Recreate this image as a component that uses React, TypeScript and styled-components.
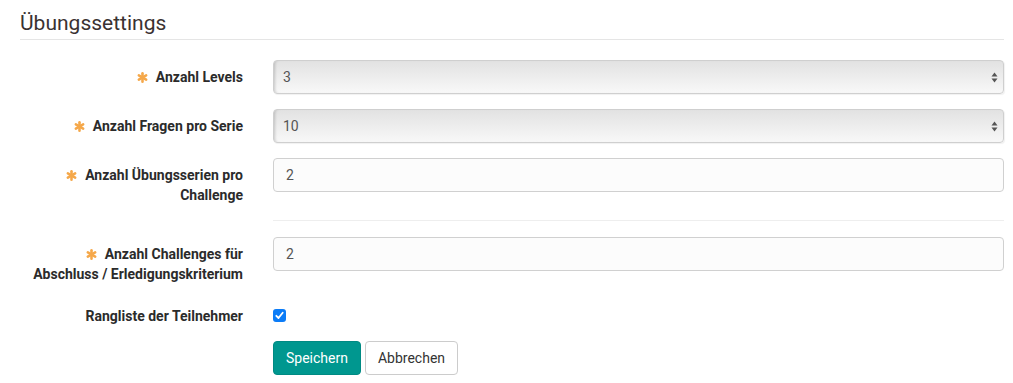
import React from "react";
import styled, { createGlobalStyle } from "styled-components";

const GlobalStyle = createGlobalStyle`
  html, body {
    margin: 0;
    padding: 0;
    background: #fff;
  }
  body {
    font-family: Roboto, "Liberation Sans", Arial, sans-serif;
    color: #333;
  }
  * {
    box-sizing: border-box;
  }
`;

const Page = styled.div`
  padding: 0 9px 0 20px;
`;

const Title = styled.h3`
  margin: 12px 0 20px;
  padding-bottom: 5px;
  font-size: 21px;
  line-height: 22px;
  font-weight: 400;
  color: #3a3231;
  border-bottom: 1px solid #e5e5e5;
`;

const Form = styled.form`
  display: flex;
  flex-direction: column;
`;

const Row = styled.div`
  display: grid;
  grid-template-columns: 223px 1fr;
  column-gap: 30px;
  margin-bottom: 15px;
  align-items: start;
`;

const Label = styled.label`
  display: block;
  padding-top: 7px;
  text-align: right;
  font-size: 14px;
  line-height: 20px;
  font-weight: 700;
  color: #2b2b2b;
`;

const Star = styled.svg`
  display: inline-block;
  width: 11px;
  height: 11px;
  margin-right: 8px;
  vertical-align: -1px;
`;

const Divider = styled.div`
  height: 1px;
  background: #eee;
  margin: 0 0 16px 253px;
`;

const SelectWrap = styled.div`
  position: relative;
`;

const Select = styled.select`
  appearance: none;
  -webkit-appearance: none;
  display: block;
  width: 100%;
  height: 34px;
  padding: 0 30px 0 9px;
  font-family: Roboto, "Liberation Sans", Arial, sans-serif;
  font-size: 14px;
  color: #555;
  border: 1px solid #cfcfcf;
  border-radius: 4px;
  background: linear-gradient(#e2e2e2, #f8f8f8);
  box-shadow: inset 3px 0 3px -2px rgba(0, 0, 0, 0.18), 1px 1px 1px rgba(0, 0, 0, 0.06);
  outline: none;
`;

const Arrows = styled.svg`
  position: absolute;
  right: 6px;
  top: 12px;
  width: 7px;
  height: 11px;
  pointer-events: none;
`;

const Input = styled.input`
  display: block;
  width: 100%;
  height: 34px;
  padding: 0 12px;
  font-family: Roboto, "Liberation Sans", Arial, sans-serif;
  font-size: 14px;
  color: #555;
  background: #fcfcfc;
  border: 1px solid #d0d0d0;
  border-radius: 4px;
  outline: none;
`;

const CheckCell = styled.div`
  padding-top: 10px;
`;

const CheckBox = styled.span`
  display: flex;
  align-items: center;
  justify-content: center;
  width: 13px;
  height: 13px;
  border-radius: 3px;
  background: #0b7cf7;
`;

const Buttons = styled.div`
  display: flex;
  gap: 4px;
`;

const Button = styled.button<{ $primary?: boolean }>`
  height: 34px;
  padding: 0 12px;
  font-family: Roboto, "Liberation Sans", Arial, sans-serif;
  font-size: 14px;
  border-radius: 4px;
  cursor: pointer;
  color: ${(p) => (p.$primary ? "#fff" : "#333")};
  background: ${(p) => (p.$primary ? "#00978f" : "#fff")};
  border: 1px solid ${(p) => (p.$primary ? "#008a83" : "#ccc")};
`;

const Required = () => (
  <Star viewBox="0 0 12 12">
    <g stroke="#f5a84a" strokeWidth="2.8" strokeLinecap="round">
      <line x1="6" y1="1.4" x2="6" y2="10.6" />
      <line x1="2" y1="3.7" x2="10" y2="8.3" />
      <line x1="2" y1="8.3" x2="10" y2="3.7" />
    </g>
  </Star>
);

const SelectField = ({ value, options }: { value: string; options: string[] }) => (
  <SelectWrap>
    <Select defaultValue={value}>
      {options.map((o) => (
        <option key={o}>{o}</option>
      ))}
    </Select>
    <Arrows viewBox="0 0 7 11">
      <path d="M3.5 0.5 L6.5 4.5 L0.5 4.5 Z" fill="#555" />
      <path d="M3.5 10.5 L6.5 6.5 L0.5 6.5 Z" fill="#555" />
    </Arrows>
  </SelectWrap>
);

export default function App() {
  return (
    <Page>
      <GlobalStyle />
      <Title>Übungssettings</Title>
      <Form onSubmit={(e) => e.preventDefault()}>
        <Row>
          <Label>
            <Required />
            Anzahl Levels
          </Label>
          <SelectField value="3" options={["1", "2", "3", "4", "5"]} />
        </Row>
        <Row>
          <Label>
            <Required />
            Anzahl Fragen pro Serie
          </Label>
          <SelectField value="10" options={["5", "10", "15", "20"]} />
        </Row>
        <Row>
          <Label>
            <Required />
            Anzahl Übungsserien pro Challenge
          </Label>
          <Input defaultValue="2" />
        </Row>
        <Divider />
        <Row>
          <Label>
            <Required />
            Anzahl Challenges für Abschluss / Erledigungskriterium
          </Label>
          <Input defaultValue="2" />
        </Row>
        <Row>
          <Label>Rangliste der Teilnehmer</Label>
          <CheckCell>
            <CheckBox>
              <svg width="9" height="9" viewBox="0 0 9 9">
                <path d="M1.3 4.8 L3.5 7 L7.7 1.8" fill="none" stroke="#fff" strokeWidth="1.8" strokeLinecap="round" strokeLinejoin="round" />
              </svg>
            </CheckBox>
          </CheckCell>
        </Row>
        <Row>
          <span />
          <Buttons>
            <Button $primary type="submit">Speichern</Button>
            <Button type="button">Abbrechen</Button>
          </Buttons>
        </Row>
      </Form>
    </Page>
  );
}
